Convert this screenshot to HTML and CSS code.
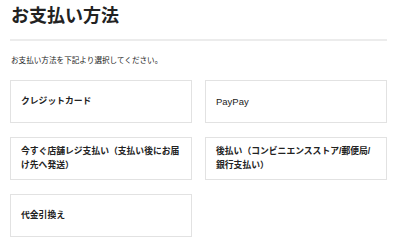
FILE: index.html
```html
<!DOCTYPE html>
<html>
<head>
  <meta charset="utf-8">
  <title>お支払い方法</title>
  <link rel="stylesheet" href="styles.css">
</head>
<body>
  <div class="container">
    <h1 class="page-title">お支払い方法</h1>
    <p class="lead">お支払い方法を下記より選択してください。</p>
    <div class="methods">
      <div class="method">クレジットカード</div>
      <div class="method latin">PayPay</div>
      <div class="method">今すぐ店舗レジ支払い（支払い後にお届け先へ発送）</div>
      <div class="method">後払い（コンビニエンスストア/郵便局/銀行支払い）</div>
      <div class="method">代金引換え</div>
    </div>
  </div>
</body>
</html>
```

FILE: styles.css
```css
* {
  box-sizing: border-box;
}
body {
  margin: 0;
  background: #fff;
  color: #222;
  font-family: "Liberation Sans", "Noto Sans CJK JP", sans-serif;
}
/* ページ全体 */
.container {
  width: 387px;
  padding: 0 0 0 10px;
}
.page-title {
  margin: 0;
  padding: 3px 0 10px 1px;
  font-size: 18px;
  line-height: 26px;
  font-weight: bold;
  border-bottom: 2px solid #ececec;
}
.lead {
  margin: 14px 0 0 1px;
  font-size: 7.6px;
  line-height: 12px;
}
/* 支払い方法カード */
.methods {
  display: grid;
  grid-template-columns: 182px 182px;
  column-gap: 13px;
  row-gap: 14px;
  margin-top: 13px;
}
.method {
  display: flex;
  align-items: center;
  min-height: 43px;
  padding: 2px 10px;
  border: 1px solid #e2e2e2;
  font-size: 8.8px;
  line-height: 13.3px;
  font-weight: bold;
}
.latin {
  font-weight: normal;
  font-size: 9.5px;
}
```
